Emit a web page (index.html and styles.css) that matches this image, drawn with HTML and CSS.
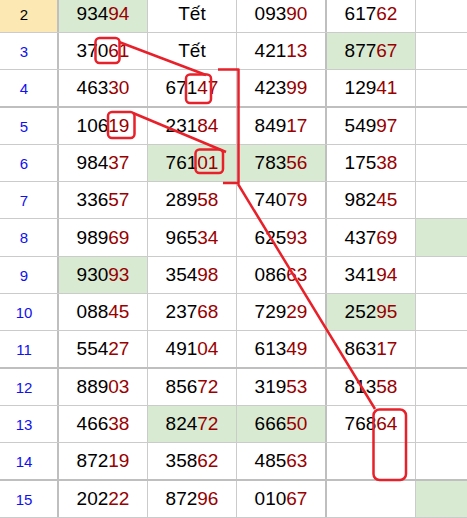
FILE: index.html
```html
<!DOCTYPE html>
<html>
<head>
<meta charset="utf-8">
<link rel="stylesheet" href="styles.css">
</head>
<body>
<div class="viewport">
  <div class="sheet">
    <div class="row"><div class="rn sel">2</div><div class="c g">934<b>94</b></div><div class="c">Tết</div><div class="c">093<b>90</b></div><div class="c">617<b>62</b></div><div class="c"></div></div>
    <div class="row"><div class="rn">3</div><div class="c">370<b>61</b></div><div class="c">Tết</div><div class="c">421<b>13</b></div><div class="c g">877<b>67</b></div><div class="c"></div></div>
    <div class="row thick"><div class="rn">4</div><div class="c">463<b>30</b></div><div class="c">671<b>47</b></div><div class="c">423<b>99</b></div><div class="c">129<b>41</b></div><div class="c"></div></div>
    <div class="row"><div class="rn">5</div><div class="c">106<b>19</b></div><div class="c">231<b>84</b></div><div class="c">849<b>17</b></div><div class="c">549<b>97</b></div><div class="c"></div></div>
    <div class="row"><div class="rn">6</div><div class="c">984<b>37</b></div><div class="c g">761<b>01</b></div><div class="c g">783<b>56</b></div><div class="c">175<b>38</b></div><div class="c"></div></div>
    <div class="row"><div class="rn">7</div><div class="c">336<b>57</b></div><div class="c">289<b>58</b></div><div class="c">740<b>79</b></div><div class="c">982<b>45</b></div><div class="c"></div></div>
    <div class="row tall"><div class="rn">8</div><div class="c">989<b>69</b></div><div class="c">965<b>34</b></div><div class="c">625<b>93</b></div><div class="c">437<b>69</b></div><div class="c g"></div></div>
    <div class="row"><div class="rn">9</div><div class="c g">930<b>93</b></div><div class="c">354<b>98</b></div><div class="c">086<b>63</b></div><div class="c">341<b>94</b></div><div class="c"></div></div>
    <div class="row"><div class="rn">10</div><div class="c">088<b>45</b></div><div class="c">237<b>68</b></div><div class="c">729<b>29</b></div><div class="c g">252<b>95</b></div><div class="c"></div></div>
    <div class="row thick"><div class="rn">11</div><div class="c">554<b>27</b></div><div class="c">491<b>04</b></div><div class="c">613<b>49</b></div><div class="c">863<b>17</b></div><div class="c"></div></div>
    <div class="row"><div class="rn">12</div><div class="c">889<b>03</b></div><div class="c">856<b>72</b></div><div class="c">319<b>53</b></div><div class="c">813<b>58</b></div><div class="c"></div></div>
    <div class="row"><div class="rn">13</div><div class="c">466<b>38</b></div><div class="c g">824<b>72</b></div><div class="c g">666<b>50</b></div><div class="c">768<b>64</b></div><div class="c"></div></div>
    <div class="row thick"><div class="rn">14</div><div class="c">872<b>19</b></div><div class="c">358<b>62</b></div><div class="c">485<b>63</b></div><div class="c"></div><div class="c"></div></div>
    <div class="row"><div class="rn">15</div><div class="c">202<b>22</b></div><div class="c">872<b>96</b></div><div class="c">010<b>67</b></div><div class="c"></div><div class="c g"></div></div>
  </div>
  <svg class="marks" width="467" height="518" viewBox="0 0 467 518" xmlns="http://www.w3.org/2000/svg">
    <g fill="none" stroke="#e8202a" stroke-width="2.5" stroke-linejoin="round">
      <rect x="95.5" y="38" width="24" height="25" rx="4"/>
      <rect x="186" y="74.5" width="25" height="28.5" rx="4"/>
      <rect x="108" y="112" width="26.5" height="26" rx="4"/>
      <rect x="195.5" y="149.5" width="27.5" height="23.5" rx="4"/>
      <rect x="373.5" y="409.5" width="32.5" height="70.5" rx="6"/>
      <line x1="119" y1="42" x2="206" y2="75"/>
      <line x1="133" y1="113" x2="226" y2="152"/>
      <polyline points="218,69.5 238.5,69.5 238.5,183 223,183"/>
      <line x1="238" y1="184" x2="375" y2="409"/>
    </g>
  </svg>
</div>
</body>
</html>
```
FILE: styles.css
```css
html, body {
  margin: 0;
  padding: 0;
  background: #ffffff;
}
.viewport {
  position: relative;
  width: 467px;
  height: 518px;
  overflow: hidden;
}
.sheet {
  margin-top: -4px;
  font-family: "Liberation Sans", Arial, sans-serif;
}
.row {
  display: grid;
  grid-template-columns: 59px 89px 89px 90px 89px 1fr;
  height: 37px;
  box-sizing: border-box;
  border-bottom: 1px solid #cbcbcb;
}
.row.tall {
  height: 38px;
}
.row.thick {
  height: 38px;
  border-bottom: 2px solid #bfbfbf;
}
.rn, .c {
  box-sizing: border-box;
  display: flex;
  align-items: center;
  justify-content: center;
  border-right: 1px solid #cbcbcb;
}
.rn {
  border-right: 2px solid #bfbfbf;
  font-size: 15px;
  color: #1010f0;
  padding-right: 9px;
}
.rn.sel {
  background: #fce8b2;
  color: #000000;
}
.c {
  font-size: 19px;
  color: #000000;
}
.c:nth-child(4) {
  border-right: 2px solid #bfbfbf;
}
.c:last-child {
  border-right: none;
}
.c b {
  font-weight: normal;
  color: #990000;
}
.g {
  background: #d9ead3;
}
.marks {
  position: absolute;
  left: 0;
  top: 0;
}
```
